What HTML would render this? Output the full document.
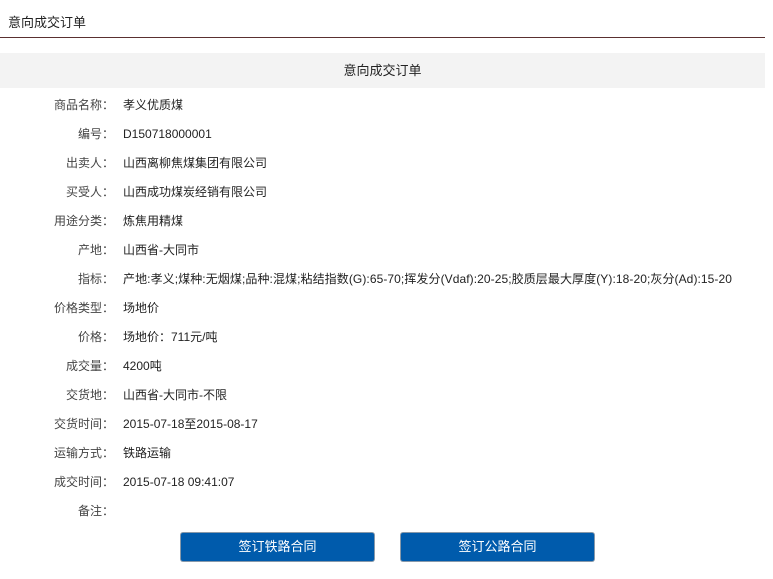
<!DOCTYPE html>
<html><head><meta charset="utf-8"><style>
body{margin:0;background:#fff;font-family:"Liberation Sans","Noto Sans CJK SC",sans-serif;font-size:12px;color:#333;width:773px;height:579px;overflow:hidden;position:relative}
.t{position:absolute;left:8px;top:12px;font-size:13px;color:#222}
.line{position:absolute;left:0;top:37px;width:765px;height:1px;background:#5a3030}
.band{position:absolute;left:0;top:53px;width:765px;height:35px;background:#f3f3f3;text-align:center;line-height:35px;font-size:13px;color:#222}
.rows{position:absolute;top:92px;left:0}
.r{height:29px;line-height:26px;white-space:nowrap}
.l{display:inline-block;width:114px;text-align:right;color:#444}
.v{display:inline-block;margin-left:9px;color:#222}
.b{position:absolute;top:533px;width:193px;height:28px;background:#005bac;color:#fff;text-align:center;line-height:28px;font-size:13px;border-radius:2px;box-shadow:0 0 0 1px #8899aa}
</style></head><body>
<div class="t">意向成交订单</div>
<div class="line"></div>
<div class="band">意向成交订单</div>
<div class="rows">
<div class="r"><span class="l">商品名称：</span><span class="v">孝义优质煤</span></div>
<div class="r"><span class="l">编号：</span><span class="v">D150718000001</span></div>
<div class="r"><span class="l">出卖人：</span><span class="v">山西离柳焦煤集团有限公司</span></div>
<div class="r"><span class="l">买受人：</span><span class="v">山西成功煤炭经销有限公司</span></div>
<div class="r"><span class="l">用途分类：</span><span class="v">炼焦用精煤</span></div>
<div class="r"><span class="l">产地：</span><span class="v">山西省-大同市</span></div>
<div class="r"><span class="l">指标：</span><span class="v" style="letter-spacing:0.08px">产地:孝义;煤种:无烟煤;品种:混煤;粘结指数(G):65-70;挥发分(Vdaf):20-25;胶质层最大厚度(Y):18-20;灰分(Ad):15-20</span></div>
<div class="r"><span class="l">价格类型：</span><span class="v">场地价</span></div>
<div class="r"><span class="l">价格：</span><span class="v">场地价：711元/吨</span></div>
<div class="r"><span class="l">成交量：</span><span class="v">4200吨</span></div>
<div class="r"><span class="l">交货地：</span><span class="v">山西省-大同市-不限</span></div>
<div class="r"><span class="l">交货时间：</span><span class="v">2015-07-18至2015-08-17</span></div>
<div class="r"><span class="l">运输方式：</span><span class="v">铁路运输</span></div>
<div class="r"><span class="l">成交时间：</span><span class="v">2015-07-18 09:41:07</span></div>
<div class="r"><span class="l">备注：</span><span class="v"></span></div>
</div>
<div class="b" style="left:181px">签订铁路合同</div>
<div class="b" style="left:401px">签订公路合同</div>
</body></html>
